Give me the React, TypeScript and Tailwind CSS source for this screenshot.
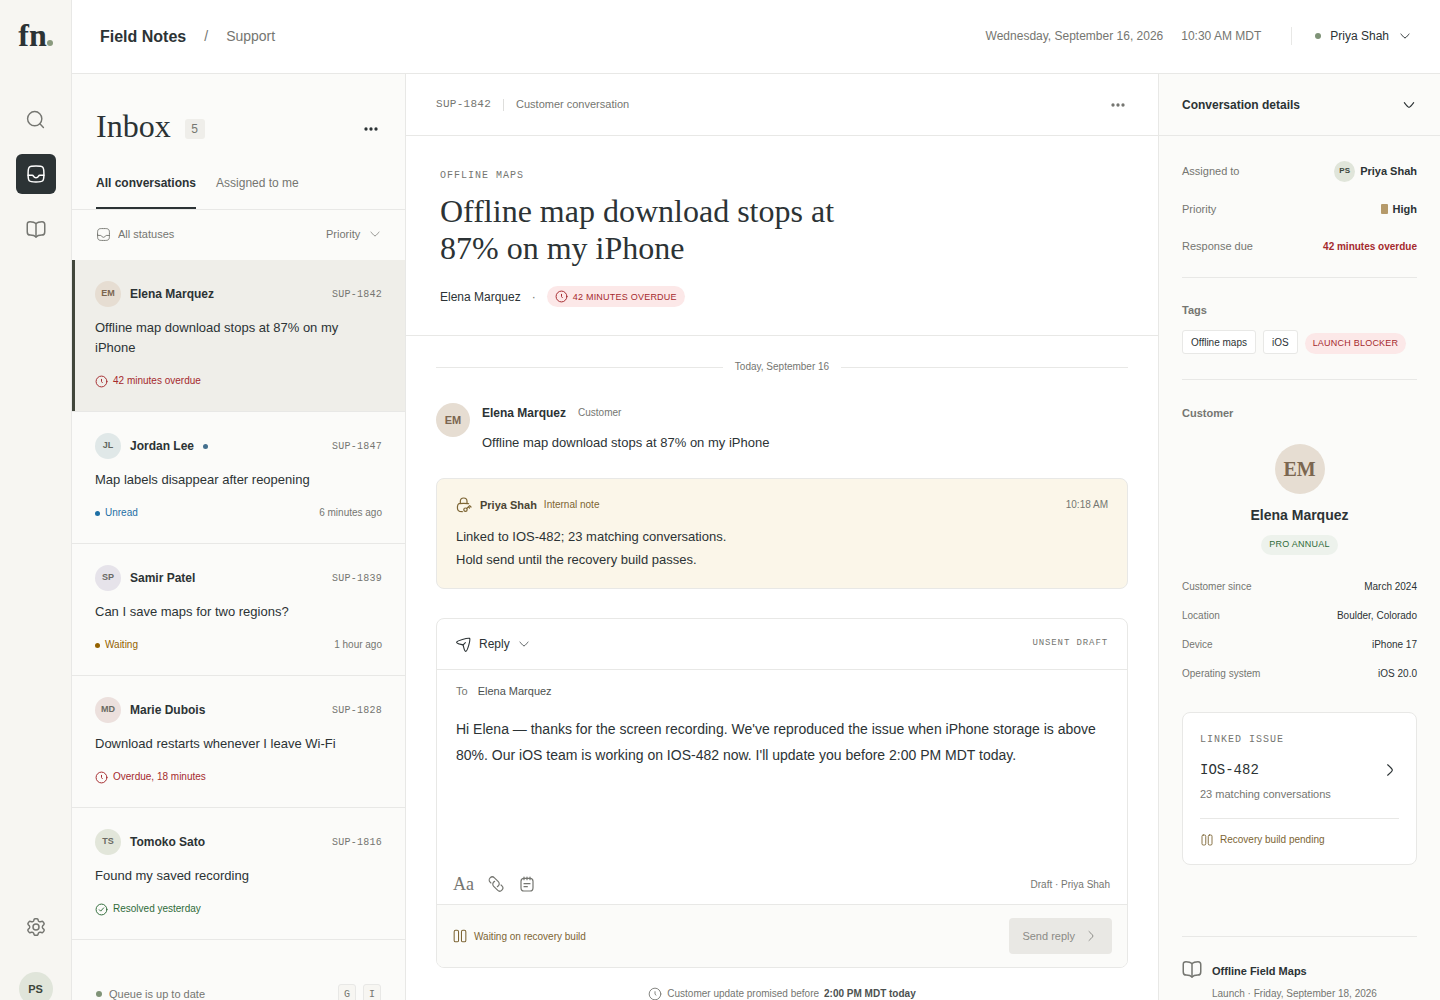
import React, { useState } from "react";
import type { ReactNode } from "react";

type IconProps = { className?: string; strokeWidth?: number; children?: ReactNode };

function Svg({ className = "size-5", strokeWidth = 1.5, children }: IconProps) {
  return (
    <svg
      viewBox="0 0 24 24"
      fill="none"
      stroke="currentColor"
      strokeWidth={strokeWidth}
      strokeLinecap="round"
      strokeLinejoin="round"
      className={`shrink-0 ${className}`}
      aria-hidden="true"
    >
      {children}
    </svg>
  );
}

const SearchIcon = (p: IconProps) => (
  <Svg {...p}>
    <circle cx="11" cy="11" r="9" />
    <path d="M17.5 17.5 22 22" />
  </Svg>
);
const TrayIcon = (p: IconProps) => (
  <Svg {...p}>
    <path d="M2.5 12c0-4.48 0-6.72 1.39-8.11S7.52 2.5 12 2.5s6.72 0 8.11 1.39S21.5 7.52 21.5 12s0 6.72-1.39 8.11S16.48 21.5 12 21.5s-6.72 0-8.11-1.39S2.5 16.48 2.5 12Z" />
    <path d="M21.5 13.5h-4.9c-.68 0-1.27.4-1.57.99-.48.98-1.33 2.01-3.03 2.01s-2.55-1.03-3.03-2.01c-.3-.6-.89-.99-1.57-.99H2.5" />
  </Svg>
);
const BookIcon = (p: IconProps) => (
  <Svg {...p}>
    <path d="M12 5.500V21.500" />
    <path d="M12 5.500C10.500 4 8.500 3.200 4.800 3.200 2.600 3.200 1.500 4.300 1.500 6.500v9c0 2.800 1 3.800 3.600 3.800 3.200 0 5.400.5 6.900 2.200 1.500-1.700 3.700-2.200 6.900-2.200 2.600 0 3.600-1 3.600-3.800v-9c0-2.200-1.100-3.300-3.300-3.300-3.700 0-5.700.8-7.200 2.300Z" />
  </Svg>
);
const GearIcon = (p: IconProps) => (
  <Svg {...p}>
    <circle cx="12" cy="12" r="3.600" />
    <path d="M21.300 7.140 20.800 6.300c-.370-.650-.560-.970-.880-1.100-.320-.130-.680-.030-1.400.180l-1.220.340c-.460.110-.940.050-1.360-.170l-.340-.200a2 2 0 0 1-.780-.960l-.330-1c-.220-.660-.330-.990-.600-1.180-.260-.190-.600-.190-1.300-.190h-1.120c-.700 0-1.040 0-1.300.190-.270.190-.380.520-.600 1.180l-.330 1a2 2 0 0 1-.780.960l-.340.200c-.420.220-.900.280-1.360.170l-1.220-.340c-.720-.210-1.080-.310-1.400-.180-.320.130-.510.450-.880 1.100l-.510.840c-.350.610-.520.910-.490 1.240.04.320.270.580.730 1.100l1.030 1.150c.250.320.430.870.430 1.370s-.180 1.050-.430 1.370l-1.030 1.150c-.460.520-.690.780-.730 1.100-.03.330.140.630.490 1.240l.510.840c.370.650.560.970.880 1.100.320.130.680.030 1.400-.180l1.220-.340c.460-.110.940-.050 1.360.170l.340.200c.350.230.620.560.780.960l.330 1c.220.660.330.990.600 1.180.260.190.600.190 1.300.190h1.120c.700 0 1.040 0 1.300-.190.270-.190.380-.520.600-1.180l.330-1c.160-.400.430-.730.780-.960l.340-.200c.420-.220.900-.280 1.360-.170l1.220.340c.720.210 1.080.310 1.400.180.320-.130.510-.450.880-1.100l.510-.840c.350-.610.520-.910.490-1.240-.04-.320-.270-.580-.730-1.100l-1.030-1.150c-.250-.320-.430-.870-.430-1.370s.180-1.050.430-1.370l1.030-1.150c.460-.520.690-.780.730-1.100.03-.330-.140-.630-.490-1.240Z" />
  </Svg>
);
const ClockIcon = (p: IconProps) => (
  <Svg {...p}>
    <circle cx="12" cy="12" r="10" />
    <path d="M12 8v4l1.500 2" />
  </Svg>
);
const CheckCircleIcon = (p: IconProps) => (
  <Svg {...p}>
    <circle cx="12" cy="12" r="10" />
    <path d="m8 12.500 2.500 2.500L16 9" />
  </Svg>
);
const ChevronDownIcon = (p: IconProps) => (
  <Svg {...p}>
    <path d="M4 8s6 8 8 8 8-8 8-8" />
  </Svg>
);
const ChevronRightIcon = (p: IconProps) => (
  <Svg {...p}>
    <path d="M8 3s8 7 8 9-8 9-8 9" />
  </Svg>
);
const DotsIcon = ({ className }: IconProps) => (
  <Svg className={className}>
    <g fill="currentColor" stroke="none">
      <circle cx="4.500" cy="12" r="2.500" />
      <circle cx="12" cy="12" r="2.500" />
      <circle cx="19.500" cy="12" r="2.500" />
    </g>
  </Svg>
);
const PauseIcon = (p: IconProps) => (
  <Svg {...p}>
    <rect x="2" y="2" width="7.500" height="20" rx="2.500" />
    <rect x="14.500" y="2" width="7.500" height="20" rx="2.500" />
  </Svg>
);
const LockKeyIcon = (p: IconProps) => (
  <Svg {...p}>
    <path d="M6.500 9.500v-3a5 5 0 0 1 10 0v3" />
    <path d="M9.500 22c-3 0-4.800-.200-6-1.600C2 18.800 2 17 2.200 14.500c.2-2.400.6-3.600 1.900-4.400 1-.6 2.300-.6 7.400-.6s6.400 0 7.400.6" />
    <circle cx="14.200" cy="19" r="2.500" />
    <path d="m16 17.200 4.500-4.200 2 2M18.600 14.900l1.600 1.600" />
  </Svg>
);
const SendIcon = (p: IconProps) => (
  <Svg {...p}>
    <path d="M21.800 2.200C18.700.900 1 6 1 8.470c0 2.630 7 3.180 9.100 3.780 1.080.310 1.370.620 1.620 1.760C12.900 19.400 13.600 22.900 15.500 22.900 18.400 22.900 23.400 4.500 21.800 2.200Z" />
    <path d="m11.500 12.500 3.500-3.500" />
  </Svg>
);
const LinkIcon = (p: IconProps) => (
  <Svg {...p}>
    <g transform="rotate(45 12 12)">
      <path d="M5.500 16.300H3.800a4.600 4.600 0 0 1 0-9.200H12a4.600 4.600 0 0 1 4.300 6.200" />
      <path d="M18.500 7.700h1.700a4.600 4.600 0 0 1 0 9.200H12a4.600 4.600 0 0 1-4.300-6.200" />
    </g>
  </Svg>
);
const NoteIcon = (p: IconProps) => (
  <Svg {...p}>
    <path d="M16.500 3.500h-9C4.500 3.500 3 5 3 8v9.500c0 3.300 1.500 5 4.500 5h9c3 0 4.500-1.700 4.500-5V8c0-3-1.500-4.500-4.500-4.500Z" />
    <path d="M7.500 1.500v4M12 1.500v4M16.500 1.500v4M7.500 11.500h9M7.500 16h5" />
  </Svg>
);

function SmallDot({ className }: { className: string }) {
  return <span className={`shrink-0 rounded-full ${className}`} />;
}

type Status = "overdue" | "unread" | "waiting" | "resolved";

type Conversation = {
  id: string;
  initials: string;
  name: string;
  subject: string;
  status: Status;
  label: string;
  time?: string;
  avatar: string;
  unread?: boolean;
};

const conversations: Conversation[] = [
  { id: "SUP-1842", initials: "EM", name: "Elena Marquez", subject: "Offline map download stops at 87% on my iPhone", status: "overdue", label: "42 minutes overdue", avatar: "bg-[#e6ddd2] text-[#7b6650]" },
  { id: "SUP-1847", initials: "JL", name: "Jordan Lee", subject: "Map labels disappear after reopening", status: "unread", label: "Unread", time: "6 minutes ago", avatar: "bg-[#e0e8e8] text-[#62665f]", unread: true },
  { id: "SUP-1839", initials: "SP", name: "Samir Patel", subject: "Can I save maps for two regions?", status: "waiting", label: "Waiting", time: "1 hour ago", avatar: "bg-[#e6e3ea] text-[#6a6a66]" },
  { id: "SUP-1828", initials: "MD", name: "Marie Dubois", subject: "Download restarts whenever I leave Wi-Fi", status: "overdue", label: "Overdue, 18 minutes", avatar: "bg-[#ece0dd] text-[#6a6a62]" },
  { id: "SUP-1816", initials: "TS", name: "Tomoko Sato", subject: "Found my saved recording", status: "resolved", label: "Resolved yesterday", avatar: "bg-[#e2e6da] text-[#6a6a62]" },
];

const statusColor: Record<Status, string> = {
  overdue: "text-[#a52a2e]",
  unread: "text-[#1d6fa5]",
  waiting: "text-[#946200]",
  resolved: "text-[#2f6b3a]",
};

function StatusMark({ status }: { status: Status }) {
  if (status === "overdue") return <ClockIcon className="size-[13px]" strokeWidth={1.8} />;
  if (status === "resolved") return <CheckCircleIcon className="size-[13px]" strokeWidth={1.8} />;
  return <SmallDot className="size-[5px] bg-current" />;
}

function NavRail() {
  return (
    <aside className="flex flex-col items-center border-r border-[#e8e8e6] bg-[#f7f6f2] pb-[18px]">
      <a href="#home" aria-label="Field Notes home" className="mt-[15px] flex items-baseline font-['Liberation_Serif',serif] text-[32px] leading-10 font-bold text-[#2c3335]">
        fn
        <SmallDot className="size-[6px] bg-[#8a9a7e]" />
      </a>
      <nav aria-label="Main" className="mt-11 flex w-full flex-1 flex-col items-center gap-[15px] text-[#757671]">
        <button type="button" aria-label="Search" className="grid size-10 place-items-center rounded-md">
          <SearchIcon className="size-[19px]" strokeWidth={1.8} />
        </button>
        <button type="button" aria-label="Inbox" aria-current="page" className="grid size-10 place-items-center rounded-md bg-[#2c3335] text-white">
          <TrayIcon className="size-5" strokeWidth={1.8} />
        </button>
        <button type="button" aria-label="Library" className="grid size-10 place-items-center rounded-md">
          <BookIcon className="size-5" strokeWidth={1.8} />
        </button>
        <button type="button" aria-label="Settings" className="mt-auto grid size-10 place-items-center rounded-md">
          <GearIcon className="size-5" strokeWidth={1.8} />
        </button>
      </nav>
      <button type="button" aria-label="Account, Priya Shah" className="mt-[25px] grid size-[34px] place-items-center rounded-full bg-[#e0e5da] text-[11px] font-bold text-[#3c463a]">
        PS
      </button>
    </aside>
  );
}

function TopBar() {
  return (
    <header className="col-span-3 flex h-[74px] items-center justify-between border-b border-[#e8e8e6] bg-white pr-[29px] pl-7">
      <div className="flex items-center">
        <a href="#field-notes" className="text-base font-bold">Field Notes</a>
        <span className="ml-[18px] pb-0.5 text-sm text-[#757671]">/</span>
        <a href="#support" className="ml-[18px] pb-0.5 text-sm text-[#757671]">Support</a>
      </div>
      <div className="flex items-center pb-0.5 text-xs text-[#757671]">
        <span>Wednesday, September 16, 2026</span>
        <span className="ml-[18px]">10:30 AM MDT</span>
        <span className="ml-[30px] h-[18px] w-px bg-[#e8e8e6]" />
        <button type="button" className="ml-[23px] flex items-center text-[#2c3335]">
          <SmallDot className="size-[6px] bg-[#7f9377]" />
          <span className="ml-[9px]">Priya Shah</span>
          <ChevronDownIcon className="ml-[10px] size-3" strokeWidth={2} />
        </button>
      </div>
    </header>
  );
}

function ConversationItem({ item, active, onSelect }: { item: Conversation; active: boolean; onSelect: () => void }) {
  return (
    <li className="border-b border-[#e8e8e6]">
      <button
        type="button"
        onClick={onSelect}
        aria-current={active}
        className={`block w-full border-l-[3px] pt-[21px] pr-[23px] pb-[22px] pl-5 text-left ${active ? "border-l-[#41463b] bg-[#efeee9]" : "border-l-transparent"}`}
      >
        <span className="flex items-center">
          <span className={`grid size-[26px] place-items-center rounded-full text-[9px] font-bold ${item.avatar}`}>{item.initials}</span>
          <span className="ml-[9px] text-xs font-bold">{item.name}</span>
          {item.unread && <SmallDot className="ml-[9px] size-[5px] bg-[#44708e]" />}
          <span className="ml-auto font-['Liberation_Mono',monospace] text-[10px] tracking-wide text-[#757671]">{item.id}</span>
        </span>
        <span className="mt-[11px] block text-[13px] leading-5">{item.subject}</span>
        <span className={`mt-[15px] flex items-center gap-[5px] text-[10px] leading-4 ${statusColor[item.status]}`}>
          <StatusMark status={item.status} />
          {item.label}
          {item.time && <span className="ml-auto text-[#757671]">{item.time}</span>}
        </span>
      </button>
    </li>
  );
}

function InboxPanel() {
  const [selected, setSelected] = useState("SUP-1842");
  return (
    <section aria-label="Inbox" className="flex flex-col border-r border-[#e8e8e6] bg-[#fbfbf9]">
      <div className="flex h-[84px] items-end pr-[26px] pl-6">
        <h1 className="mb-[14px] font-['Liberation_Serif',serif] text-[32px] leading-9">Inbox</h1>
        <span className="mb-[19px] ml-[14px] grid h-5 w-5 place-items-center rounded-[3px] bg-[#efeeea] text-xs text-[#757671]">5</span>
        <button type="button" aria-label="Inbox options" className="mb-[21px] ml-auto flex">
          <DotsIcon className="size-4" />
        </button>
      </div>
      <div role="tablist" className="flex h-[52px] gap-[20px] border-b border-[#e8e8e6] px-6 text-xs">
        <button type="button" role="tab" aria-selected="true" className="border-b-2 border-[#2c3335] font-bold">All conversations</button>
        <button type="button" role="tab" aria-selected="false" className="border-b-2 border-transparent text-[#757671]">Assigned to me</button>
      </div>
      <div className="flex h-[50px] items-center justify-between px-6 pb-0.5 text-[11px] text-[#757671]">
        <label className="flex items-center gap-[7px]">
          <TrayIcon className="size-[15px]" />
          <select aria-label="Status" className="appearance-none bg-transparent">
            <option>All statuses</option>
          </select>
        </label>
        <label className="flex items-center gap-[8px]">
          <select aria-label="Sort by" className="appearance-none bg-transparent">
            <option>Priority</option>
          </select>
          <ChevronDownIcon className="size-3" />
        </label>
      </div>
      <ul>
        {conversations.map((c) => (
          <ConversationItem key={c.id} item={c} active={selected === c.id} onSelect={() => setSelected(c.id)} />
        ))}
      </ul>
      <div className="mt-auto flex items-center pb-5 pr-6 pl-6 text-[11px] text-[#757671]">
        <SmallDot className="size-[6px] bg-[#7f9377]" />
        <span className="ml-[7px]">Queue is up to date</span>
        <kbd className="ml-auto grid h-5 w-[18px] place-items-center rounded-[3px] border border-[#e8e8e6] bg-[#f7f6f2] font-['Liberation_Mono',monospace] text-[10px]">G</kbd>
        <kbd className="ml-[7px] grid h-5 w-[18px] place-items-center rounded-[3px] border border-[#e8e8e6] bg-[#f7f6f2] font-['Liberation_Mono',monospace] text-[10px]">I</kbd>
      </div>
    </section>
  );
}

function Composer() {
  const [draft, setDraft] = useState(
    "Hi Elena — thanks for the screen recording. We've reproduced the issue when iPhone storage is above 80%. Our iOS team is working on IOS-482 now. I'll update you before 2:00 PM MDT today."
  );
  return (
    <form className="mt-[29px] flex flex-col overflow-hidden rounded-lg border border-[#e8e8e6]">
      <div className="flex h-[51px] items-center border-b border-[#e8e8e6] px-[19px]">
        <SendIcon className="size-[15px]" strokeWidth={1.8} />
        <label className="ml-2 flex items-center gap-[8px]">
          <select aria-label="Message type" className="appearance-none bg-transparent text-xs">
            <option>Reply</option>
          </select>
          <ChevronDownIcon className="size-3" />
        </label>
        <span className="ml-auto font-['Liberation_Mono',monospace] text-[9px] tracking-widest text-[#757671]">UNSENT DRAFT</span>
      </div>
      <div className="flex items-center px-[19px] pt-[13px] text-[11px] leading-4">
        <label htmlFor="to" className="text-[#757671]">To</label>
        <input id="to" defaultValue="Elena Marquez" className="ml-[10px] flex-1 bg-transparent text-[#4c5150] outline-none" />
      </div>
      <textarea
        aria-label="Reply text"
        value={draft}
        onChange={(e) => setDraft(e.target.value)}
        rows={5}
        className="mt-[17px] block w-full resize-none bg-transparent px-[19px] text-sm leading-[26px] outline-none"
      />
      <div className="mt-[29px] mb-[11px] flex h-[18px] items-center pr-[17px] pl-4 text-[#757671]">
        <button type="button" aria-label="Text formatting" className="font-['Liberation_Serif',serif] text-lg leading-5">Aa</button>
        <button type="button" aria-label="Attach link" className="ml-[14px]">
          <LinkIcon className="size-4" strokeWidth={1.8} />
        </button>
        <button type="button" aria-label="Insert note" className="ml-[15px]">
          <NoteIcon className="size-4" strokeWidth={1.8} />
        </button>
        <span className="ml-auto text-[10px]">Draft · Priya Shah</span>
      </div>
      <div className="flex h-[63px] items-center border-t border-[#e8e8e6] bg-[#fbfbf9] pr-[15px] pl-4 text-[#7d6534]">
        <PauseIcon className="size-[14px]" strokeWidth={1.8} />
        <span className="ml-[7px] text-[10px]">Waiting on recovery build</span>
        <button type="submit" disabled className="ml-auto flex h-9 items-center rounded-[4px] bg-[#e9e8e4] pr-[15px] pl-[13px] text-[11px] text-[#8b8b86]">
          Send reply
          <ChevronRightIcon className="ml-[10px] size-3" strokeWidth={2} />
        </button>
      </div>
    </form>
  );
}

function ConversationPanel() {
  return (
    <main className="flex min-w-0 flex-col bg-white">
      <div className="flex h-[62px] items-center border-b border-[#e8e8e6] px-[30px] text-[#757671]">
        <span className="font-['Liberation_Mono',monospace] text-[11px] tracking-wide">SUP-1842</span>
        <span className="ml-3 h-3 w-px bg-[#dededc]" />
        <span className="ml-3 text-[11px]">Customer conversation</span>
        <button type="button" aria-label="Conversation options" className="ml-auto grid size-5 place-items-center">
          <DotsIcon className="size-4" />
        </button>
      </div>
      <div className="border-b border-[#e8e8e6] px-[34px] pt-8 pb-7">
        <p className="font-['Liberation_Mono',monospace] text-[10px] leading-4 tracking-widest text-[#757671]">OFFLINE MAPS</p>
        <h2 className="mt-[9px] max-w-[440px] font-['Liberation_Serif',serif] text-[32px] leading-[37px]">Offline map download stops at 87% on my iPhone</h2>
        <div className="mt-[19px] flex items-center text-xs">
          <span>Elena Marquez</span>
          <span className="ml-[11px] text-[#757671]">·</span>
          <span className="ml-[11px] flex h-[21px] items-center gap-[5px] rounded-full bg-[#fce8e8] px-2 text-[9px] tracking-wide text-[#a52a2e]">
            <ClockIcon className="size-[13px]" strokeWidth={1.8} />
            42 MINUTES OVERDUE
          </span>
        </div>
      </div>
      <div className="px-[30px] pt-[23px]">
        <div className="flex items-center gap-3 text-[10px] leading-4 text-[#757671]">
          <span className="h-px flex-1 bg-[#e8e8e6]" />
          Today, September 16
          <span className="h-px flex-1 bg-[#e8e8e6]" />
        </div>
        <article className="mt-7 flex gap-3">
          <span className="grid size-[34px] place-items-center rounded-full bg-[#e6ddd2] text-[11px] font-bold text-[#7b6650]">EM</span>
          <div>
            <div className="flex items-center gap-3 leading-5">
              <span className="text-xs font-bold">Elena Marquez</span>
              <span className="text-[10px] text-[#757671]">Customer</span>
            </div>
            <p className="mt-[9px] text-[13px] leading-[22px]">Offline map download stops at 87% on my iPhone</p>
          </div>
        </article>
        <article className="mt-6 rounded-lg border border-[#e8e8e6] bg-[#fbf6e9] px-[19px] pt-[18px] pb-[17px]">
          <div className="flex items-center text-[10px] leading-4 text-[#7d6534]">
            <LockKeyIcon className="size-4" strokeWidth={1.8} />
            <span className="ml-2 text-[11px] font-bold text-[#4a4534]">Priya Shah</span>
            <span className="ml-[7px]">Internal note</span>
            <time className="ml-auto text-[#757671]">10:18 AM</time>
          </div>
          <p className="mt-3 text-[13px] leading-[23px]">
            Linked to IOS-482; 23 matching conversations.
            <br />
            Hold send until the recovery build passes.
          </p>
        </article>
        <Composer />
        <p className="mt-[18px] flex items-center justify-center text-[10px] leading-4 text-[#757671]">
          <ClockIcon className="size-[14px]" />
          <span className="ml-[5px]">Customer update promised before</span>
          <strong className="ml-[5px] text-[#4c5150]">2:00 PM MDT today</strong>
        </p>
      </div>
    </main>
  );
}

const customerFacts = [
  ["Customer since", "March 2024"],
  ["Location", "Boulder, Colorado"],
  ["Device", "iPhone 17"],
  ["Operating system", "iOS 20.0"],
];

function DetailsPanel() {
  return (
    <aside aria-label="Conversation details" className="flex flex-col border-l border-[#e8e8e6] bg-[#fbfbf9]">
      <button type="button" aria-expanded="true" className="flex h-[62px] items-center justify-between border-b border-[#e8e8e6] pr-6 pl-[23px] text-xs font-bold">
        Conversation details
        <ChevronDownIcon className="size-[14px]" strokeWidth={2} />
      </button>
      <div className="flex flex-1 flex-col px-[23px]">
        <dl className="border-b border-[#e8e8e6] pt-4 pb-[13px] text-[11px]">
          <div className="flex h-[38px] items-center justify-between">
            <dt className="text-[#757671]">Assigned to</dt>
            <dd className="flex items-center font-bold">
              <span className="mr-[5px] grid size-[21px] place-items-center rounded-full bg-[#e0e5da] text-[8px] text-[#3c463a]">PS</span>
              Priya Shah
            </dd>
          </div>
          <div className="flex h-[38px] items-center justify-between">
            <dt className="text-[#757671]">Priority</dt>
            <dd className="flex items-center font-bold">
              <span className="mr-[5px] h-[10px] w-[7px] rounded-[1px] bg-[#b59a6a]" />
              High
            </dd>
          </div>
          <div className="flex h-9 items-center justify-between">
            <dt className="text-[#757671]">Response due</dt>
            <dd className="text-[10px] font-bold text-[#a52a2e]">42 minutes overdue</dd>
          </div>
        </dl>
        <section className="border-b border-[#e8e8e6] pt-6 pb-[25px]">
          <h3 className="text-[11px] leading-4 font-bold text-[#757671]">Tags</h3>
          <div className="mt-3 flex items-end gap-[7px] text-[10px]">
            <span className="flex h-6 items-center rounded-[3px] border border-[#e8e8e6] bg-white px-2">Offline maps</span>
            <span className="flex h-6 items-center rounded-[3px] border border-[#e8e8e6] bg-white px-2">iOS</span>
            <span className="flex h-[21px] items-center rounded-full bg-[#fce8e8] px-2 text-[9px] tracking-wide text-[#a52a2e]">LAUNCH BLOCKER</span>
          </div>
        </section>
        <section className="flex flex-col pt-[25px]">
          <h3 className="text-[11px] leading-4 font-bold text-[#757671]">Customer</h3>
          <span className="mt-[23px] grid size-[50px] place-items-center self-center rounded-full bg-[#e6ddd2] font-['Liberation_Serif',serif] text-xl font-bold text-[#7b6650]">EM</span>
          <p className="mt-[11px] self-center text-sm leading-5 font-bold">Elena Marquez</p>
          <span className="mt-[10px] flex h-5 items-center self-center rounded-full bg-[#edf2ec] px-2 text-[9px] tracking-wide text-[#2f6b3a]">PRO ANNUAL</span>
          <dl className="mt-[17px] text-[10px]">
            {customerFacts.map(([term, value]) => (
              <div key={term} className="flex h-[29px] items-center justify-between">
                <dt className="text-[#757671]">{term}</dt>
                <dd>{value}</dd>
              </div>
            ))}
          </dl>
        </section>
        <section className="mt-6 rounded-lg border border-[#e8e8e6] bg-white px-[17px] pt-[19px] pb-4">
          <p className="font-['Liberation_Mono',monospace] text-[10px] leading-4 tracking-widest text-[#757671]">LINKED ISSUE</p>
          <a href="#ios-482" className="mt-3 flex items-center justify-between pr-[2px] font-['Liberation_Mono',monospace] text-sm leading-5">
            IOS-482
            <ChevronRightIcon className="size-[14px]" strokeWidth={2} />
          </a>
          <p className="mt-[6px] text-[11px] leading-4 text-[#757671]">23 matching conversations</p>
          <div className="mt-4 flex items-center border-t border-[#e8e8e6] pt-[13px] text-[10px] leading-4 text-[#7d6534]">
            <PauseIcon className="ml-px size-3" strokeWidth={1.8} />
            <span className="ml-[7px]">Recovery build pending</span>
          </div>
        </section>
        <a href="#launch" className="mt-auto flex border-t border-[#e8e8e6] pt-[22px] pb-[22px]">
          <BookIcon className="size-5 text-[#757671]" strokeWidth={1.8} />
          <span className="ml-[10px]">
            <span className="mt-1 block text-[11px] leading-4 font-bold">Offline Field Maps</span>
            <span className="mt-[7px] block text-[10px] leading-4 text-[#757671]">Launch · Friday, September 18, 2026</span>
          </span>
        </a>
      </div>
    </aside>
  );
}

export default function App() {
  return (
    <div className="h-screen overflow-y-auto bg-white font-['Liberation_Sans',Arial,sans-serif] text-[#2c3335] antialiased [scrollbar-width:none]">
      <div className="grid min-h-[1024px] grid-cols-[72px_minmax(0,1fr)]">
        <NavRail />
        <div className="grid grid-cols-[334px_minmax(0,1fr)_282px] grid-rows-[auto_1fr]">
          <TopBar />
          <InboxPanel />
          <ConversationPanel />
          <DetailsPanel />
        </div>
      </div>
    </div>
  );
}
